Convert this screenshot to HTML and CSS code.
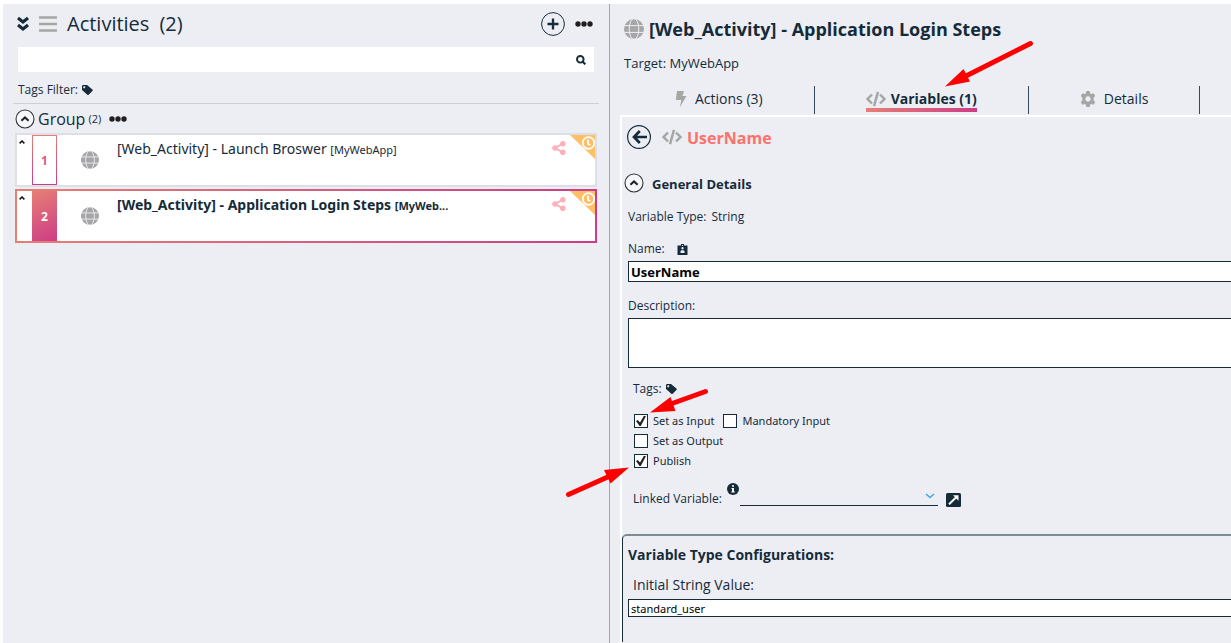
FILE: index.html
```html
<!DOCTYPE html>
<html lang="en">
<head>
<meta charset="utf-8">
<meta name="viewport" content="width=device-width, initial-scale=1">
<title>Activities</title>
<link rel="stylesheet" href="styles.css">
</head>
<body>
<svg class="sprite" aria-hidden="true">
  <symbol id="globe" viewBox="0 0 20 20">
    <circle cx="10" cy="10" r="10" fill="#a6a6a6"/>
    <g fill="none" stroke="#edeef4" stroke-width="1"><ellipse cx="10" cy="10" rx="4.8" ry="10.4"/><path d="M0 6.6h20M0 13.4h20"/></g>
  </symbol>
  <symbol id="dots" viewBox="0 0 18 6"><g fill="#231f20"><circle cx="3" cy="3" r="2.7"/><circle cx="9" cy="3" r="2.7"/><circle cx="15" cy="3" r="2.7"/></g></symbol>
  <symbol id="collapse" viewBox="0 0 20 20"><circle cx="10" cy="10" r="9" fill="#fff" fill-opacity=".5" stroke="#333" stroke-width="1.1"/><path d="M6.4 11.8 10 8.4l3.6 3.4" fill="none" stroke="#222" stroke-width="2"/></symbol>
  <symbol id="tag" viewBox="0 0 12 12"><path fill="#152b39" fill-rule="evenodd" d="M1 2.2Q1 1 2.2 1H6l5.4 4.6q.7.6 0 1.300L7.700 10.700q-.7.700-1.400 0L1 6zM3.200 2.300a1 1 0 1 0 .01 0z"/></symbol>
  <symbol id="code" viewBox="0 0 20 16"><path d="M6 3.500 1.600 8 6 12.500M14 3.500 18.400 8 14 12.500M12 .8 8 15.200" fill="none" stroke="#a6a6a6" stroke-width="2.500"/></symbol>
  <symbol id="share" viewBox="0 0 14 14"><path d="M11 2.500 3 7l8 4.500" fill="none" stroke="#ffb1bb" stroke-width="2"/><g fill="#ffb1bb"><circle cx="10.800" cy="2.800" r="2.800"/><circle cx="3" cy="7" r="2.800"/><circle cx="10.800" cy="11.200" r="2.800"/></g></symbol>
  <symbol id="clock" viewBox="0 0 25 24"><path d="M0 0h25v24z" fill="#ffbf66"/><circle cx="18.500" cy="8" r="5.800" fill="none" stroke="#fff" stroke-width="1.700"/><path d="M18 4.500v4.200l2.200 1.500" fill="none" stroke="#fff" stroke-width="1.700"/></symbol>
  <symbol id="caret" viewBox="0 0 6 4"><path d="M.6 3.400 3 1l2.400 2.400" fill="none" stroke="#111" stroke-width="1.500"/></symbol>
</svg>

<main class="workspace">
  <section class="activities" aria-label="Activities">
    <header class="activities-head">
      <button class="icon-button" aria-label="Expand all"><svg width="12" height="16" viewBox="0 0 12 16"><path d="M1 2l5 4 5-4M1 9l5 4 5-4" fill="none" stroke="#152b39" stroke-width="3.200"/></svg></button>
      <button class="icon-button" aria-label="List view"><svg width="18" height="16" viewBox="0 0 18 16"><path d="M0 1.500h18M0 8h18M0 14.500h18" stroke="#a6a6a6" stroke-width="2.600"/></svg></button>
      <h1 class="activities-title"><span>Activities</span><span>(2)</span></h1>
      <button class="icon-button add" aria-label="Add activity"><svg width="24" height="24" viewBox="0 0 24 24"><circle cx="12" cy="12" r="11.400" fill="none" stroke="#152b39"/><path d="M12 6.500v11M6.500 12h11" stroke="#152b39" stroke-width="2.300"/></svg></button>
      <button class="icon-button" aria-label="More options"><svg width="18" height="6"><use href="#dots"/></svg></button>
    </header>
    <div class="search">
      <input class="search-input" type="search" aria-label="Search activities">
      <button class="icon-button" aria-label="Search"><svg width="10" height="10" viewBox="0 0 10 10"><circle cx="4.300" cy="4.300" r="3.300" fill="none" stroke="#152b39" stroke-width="1.900"/><path d="M6.500 6.500 9.300 9.300" stroke="#152b39" stroke-width="2.200"/></svg></button>
    </div>
    <div class="tags-filter">Tags Filter: <button class="icon-button" aria-label="Filter by tag"><svg width="12" height="12"><use href="#tag"/></svg></button></div>
    <div class="group-head">
      <button class="icon-button" aria-label="Collapse group"><svg width="20" height="20"><use href="#collapse"/></svg></button>
      <h2 class="group-name">Group</h2><span class="group-count">(2)</span>
      <button class="icon-button" aria-label="Group options"><svg width="18" height="6"><use href="#dots"/></svg></button>
    </div>
    <div class="cards">
      <article class="card">
        <button class="icon-button card-caret" aria-label="Collapse"><svg width="6" height="4"><use href="#caret"/></svg></button>
        <span class="card-number">1</span>
        <svg class="card-globe" width="18" height="18"><use href="#globe"/></svg>
        <p class="card-name">[Web_Activity] - Launch Broswer <small class="card-target">[MyWebApp]</small></p>
        <svg class="card-share" width="14" height="14"><use href="#share"/></svg>
        <svg width="25" height="24"><use href="#clock"/></svg>
      </article>
      <article class="card card-selected">
        <button class="icon-button card-caret" aria-label="Collapse"><svg width="6" height="4"><use href="#caret"/></svg></button>
        <span class="card-number">2</span>
        <svg class="card-globe" width="18" height="18"><use href="#globe"/></svg>
        <p class="card-name">[Web_Activity] - Application Login Steps <small class="card-target">[MyWeb...</small></p>
        <svg class="card-share" width="14" height="14"><use href="#share"/></svg>
        <svg width="25" height="24"><use href="#clock"/></svg>
      </article>
    </div>
  </section>

  <section class="editor" aria-label="Activity editor">
    <header class="editor-head">
      <svg width="20" height="20"><use href="#globe"/></svg>
      <h2 class="editor-title">[Web_Activity] - Application Login Steps</h2>
    </header>
    <p class="target">Target: MyWebApp</p>
    <nav class="tabs">
      <a class="tab" href="#actions"><span class="tab-label"><svg width="12" height="16" viewBox="0 0 12 16"><path d="M2 0h7L7.500 5H11.500L5 16l1.300-7H.8z" fill="#a6a6a6"/></svg>Actions (3)</span></a>
      <a class="tab tab-active" href="#variables"><span class="tab-label"><svg width="20" height="16"><use href="#code"/></svg>Variables (1)</span></a>
      <a class="tab" href="#details"><span class="tab-label"><svg width="16" height="16" viewBox="0 0 16 16"><path fill="#a6a6a6" fill-rule="evenodd" d="M6.300 0h3.400l.4 2.200 1.300.8 2.200-.8 1.700 2.900L13.600 6.600v2.800l1.700 1.500-1.700 2.900-2.200-.8-1.300.8-.4 2.200H6.300l-.4-2.200-1.300-.8-2.200.8-1.700-2.900 1.700-1.500V6.600L.7 5.100l1.700-2.900 2.200.8 1.300-.8zM8 5.300a2.700 2.700 0 1 0 .01 0z"/></svg>Details</span></a>
    </nav>

    <div class="panel">
      <div class="variable-head">
        <button class="icon-button" aria-label="Back"><svg width="24" height="24" viewBox="0 0 24 24"><circle cx="12" cy="12" r="11.400" fill="none" stroke="#152b39" stroke-width="1.200"/><path d="M12.800 6 7 12l5.800 6M7 12h13" fill="none" stroke="#152b39" stroke-width="2.700"/></svg></button>
        <svg width="20" height="16"><use href="#code"/></svg>
        <h3 class="variable-name">UserName</h3>
      </div>
      <div class="section-head">
        <button class="icon-button" aria-label="Collapse general details"><svg width="20" height="20"><use href="#collapse"/></svg></button>
        <h4 class="section-title">General Details</h4>
      </div>
      <form class="details">
        <p class="line variable-type"><span>Variable Type:</span><span>String</span></p>
        <div class="line name-line"><label for="name">Name:</label><svg width="11" height="11" viewBox="0 0 11 11"><path fill="#152b39" fill-rule="evenodd" d="M.5 1.500H4V0h3v1.500h3.500V11H.5zM5.500 3a1.200 1.200 0 1 0 .01 0zM3.500 7v2h4V7l-1-.8h-2z"/><path d="M5 1h1v1H5z" fill="#edeef4"/></svg></div>
        <input class="field field-name" id="name" type="text" value="UserName">
        <label class="line description-label" for="description">Description:</label>
        <textarea class="field field-description" id="description"></textarea>
        <div class="options">
          <div class="line tags">Tags: <button type="button" class="icon-button" aria-label="Edit tags"><svg width="12" height="12"><use href="#tag"/></svg></button></div>
          <div class="checks">
            <div class="check-row">
              <label class="check"><input class="check-box" type="checkbox" checked>Set as Input</label>
              <label class="check"><input class="check-box" type="checkbox">Mandatory Input</label>
            </div>
            <label class="check"><input class="check-box" type="checkbox">Set as Output</label>
            <label class="check"><input class="check-box" type="checkbox" checked>Publish</label>
          </div>
          <div class="linked">
            <label for="linked">Linked Variable:</label>
            <svg class="info" width="12" height="12" viewBox="0 0 12 12"><circle cx="6" cy="6" r="6" fill="#152b39"/><path d="M5 2.200h2v1.600H5zM4.500 5H7v3.500h.8v1H4.300v-1H5V6h-.5z" fill="#fff"/></svg>
            <span class="select-wrap">
              <select class="select" id="linked"><option></option></select>
              <svg class="select-arrow" width="10" height="6" viewBox="0 0 10 6"><path d="M1 1l4 3.500L9 1" fill="none" stroke="#3fa2ee" stroke-width="1.400"/></svg>
            </span>
            <button type="button" class="icon-button" aria-label="Open linked variable"><svg width="15" height="14" viewBox="0 0 15 14"><rect width="15" height="14" rx="1.500" fill="#152b39"/><path d="M3 11.200 11 3.500" stroke="#fff" stroke-width="1.900"/><path d="M7 2.200h5.500v5.500z" fill="#fff"/></svg></button>
          </div>
        </div>
        <fieldset class="config">
          <h4 class="config-title">Variable Type Configurations:</h4>
          <label class="config-label" for="initial">Initial String Value:</label>
          <input class="field field-initial" id="initial" type="text" value="standard_user">
        </fieldset>
      </form>
    </div>
  </section>
</main>

<svg class="arrows" width="1231" height="643" viewBox="0 0 1231 643" aria-hidden="true">
  <g stroke="#fe0000" stroke-width="5" stroke-linecap="round"><path d="M1030.500 43.500 966 76M705.500 391.500 672 403.500M568.500 494.500 610 476"/></g>
  <g fill="#fe0000"><path d="M945 86.500 963.500 69l6.500 12.500zM650 412.500 670.500 397l5 14zM629 467.500 604 470l6.500 13.500z"/></g>
</svg>
</body>
</html>
```
FILE: styles.css
```css
* {
  box-sizing: border-box;
}

body {
  display: flex;
  min-height: 100vh;
  margin: 0;
  padding: 4px 0 0 3px;
  overflow-x: hidden;
  background: #fff;
  color: #152b39;
  font-family: "Open Sans", "Noto Sans", sans-serif;
  font-size: 12px;
  line-height: 16px;
}

h1, h2, h3, h4, p {
  margin: 0;
}

svg {
  display: block;
  flex: none;
}

.sprite {
  position: absolute;
  width: 0;
  height: 0;
}

.icon-button {
  display: flex;
  flex: none;
  padding: 0;
  border: 0;
  background: none;
  cursor: pointer;
}

.workspace {
  display: grid;
  flex: 1;
  grid-template-columns: minmax(0, 607fr) minmax(0, 621fr);
  background: #edeef4;
}

/* Activity list */

.activities {
  padding: 6px 12px 0;
  border-right: 1px solid #a5a6ab;
}

.activities-head {
  display: flex;
  align-items: center;
  gap: 10px;
  height: 28px;
  padding: 0 4px 0 2px;
}

.activities-title {
  display: flex;
  gap: 10px;
  font-size: 20px;
  font-weight: 400;
  line-height: 28px;
}

.add {
  margin-left: auto;
}

.search {
  display: flex;
  align-items: center;
  height: 25px;
  margin: 9px 3px 0;
  padding-right: 8px;
  background: #fff;
}

.search-input {
  flex: 1;
  min-width: 0;
  height: 25px;
  border: 0;
  outline: 0;
  background: none;
}

.tags-filter {
  display: flex;
  align-items: center;
  gap: 3px;
  height: 32px;
  margin: 0 -2px;
  padding: 4px 5px 0;
  border-bottom: 1px solid #cfd0d4;
}

.group-head {
  display: flex;
  align-items: center;
  height: 29px;
  gap: 3px;
}

.group-name {
  font-size: 16px;
  font-weight: 400;
}

.group-count {
  margin-right: 5px;
  font-size: 11px;
}

.cards {
  display: grid;
  gap: 2px;
}

.card {
  display: flex;
  height: 54px;
  border: 2px solid #dcdfe6;
  background: #fff;
}

.card-selected {
  border-color: transparent;
  background:
    linear-gradient(#fff, #fff) padding-box,
    linear-gradient(90deg, #e67f75, #cd3c86) border-box;
}

.card-caret {
  width: 15px;
  padding: 5px 0 0 2px;
}

.card-number {
  flex: none;
  width: 25px;
  border: 1px solid transparent;
  background:
    linear-gradient(#fff, #fff) padding-box,
    linear-gradient(#e67f75, #cd3c86) border-box;
  color: #dd5a7c;
  font-size: 12px;
  font-weight: 700;
  line-height: 50px;
  text-align: center;
}

.card-selected .card-number {
  background: linear-gradient(155deg, #e67f75, #cd3c86) border-box;
  color: #fff;
}

.card-globe {
  align-self: center;
  margin: 0 18px 0 24px;
}

.card-name {
  flex: 1;
  min-width: 0;
  padding-top: 4px;
  overflow: hidden;
  font-family: "Noto Sans", "Open Sans", sans-serif;
  font-size: 14px;
  line-height: 20px;
  white-space: nowrap;
}

.card-selected .card-name {
  font-weight: 700;
}

.card-target {
  font-size: 11px;
}

.card-share {
  margin: 6px 4px 0 0;
}

/* Editor */

.editor {
  display: flex;
  flex-direction: column;
  padding: 13px 0 0 10px;
}

.editor-head {
  display: flex;
  align-items: center;
  gap: 5px;
  height: 24px;
  padding-left: 4px;
}

.editor-title {
  font-size: 18px;
  line-height: 24px;
  white-space: nowrap;
}

.target {
  padding: 13px 4px 0;
  font-size: 13px;
  line-height: 18px;
}

.tabs {
  display: flex;
  height: 28px;
  margin: 14px 0 1px 4px;
}

.tab {
  flex: none;
  padding: 0 51px;
  border-right: 1px solid #33485a;
  color: inherit;
  font-size: 14px;
  text-decoration: none;
}

.tab-label {
  display: flex;
  align-items: center;
  gap: 8px;
  height: 26px;
}

.tab-active .tab-label {
  gap: 5px;
  border-bottom: 4px solid;
  border-image: linear-gradient(90deg, #e67f75, #cd3c86) 1;
  border-width: 0 0 4px;
  padding-top: 4px;
  font-weight: 700;
}

.panel {
  flex: 1;
  border: solid #fff;
  border-width: 2px 0 0 2px;
}

.variable-head {
  display: flex;
  align-items: center;
  height: 40px;
  gap: 11px;
  padding-left: 5px;
}

.variable-name {
  margin-left: -6px;
  padding-top: 2px;
  color: #fb726d;
  font-size: 16px;
}

.section-head {
  display: flex;
  align-items: center;
  gap: 8px;
  height: 20px;
  margin-top: 16px;
  padding-left: 2px;
}

.section-title {
  padding-top: 2px;
  font-size: 13px;
}

.line {
  display: flex;
  padding-left: 6px;
}

.variable-type {
  gap: 5px;
  margin-top: 16px;
}

.name-line {
  align-items: center;
  gap: 12px;
  margin: 16px 0 4px;
}

.field {
  display: block;
  width: 100%;
  margin: 0;
  padding: 0 2px;
  border: 1px solid #152b39;
  border-right: 0;
  border-radius: 0;
  outline: 0;
  background: #fff;
  color: #000;
  font-family: inherit;
}

.field-name,
.field-description {
  width: calc(100% - 6px);
  margin-left: 6px;
}

.field-name {
  height: 21px;
  font-size: 13px;
  font-weight: 700;
}

.description-label {
  margin: 16px 0 4px;
}

.field-description {
  height: 50px;
  resize: none;
}

.options {
  padding: 13px 0 27px 11px;
}

.tags {
  align-items: center;
  gap: 3px;
  padding-left: 0;
}

.checks {
  display: grid;
  gap: 4px;
  margin: 16px 0 0 1px;
  font-family: "Noto Sans", "Open Sans", sans-serif;
  font-size: 11px;
}

.check-row {
  display: flex;
  gap: 9px;
}

.check {
  display: flex;
  align-items: center;
  gap: 5px;
}

.check-box {
  display: grid;
  width: 14px;
  height: 14px;
  margin: 0;
  border: 1px solid #152b39;
  background: #fff;
  appearance: none;
}

.check-box:checked::before {
  content: "";
  width: 10px;
  height: 10px;
  margin: 1px;
  background: #222;
  clip-path: polygon(0 50%, 18% 40%, 40% 65%, 78% 0, 100% 0, 48% 100%, 35% 100%);
}

.linked {
  display: flex;
  align-items: flex-end;
  height: 24px;
  margin-top: 14px;
}

.info {
  align-self: flex-start;
  margin: 0 1px 0 5px;
}

.select-wrap {
  position: relative;
  width: 198px;
}

.select {
  display: block;
  width: 100%;
  height: 20px;
  margin: 0 0 1px;
  border: 0;
  border-bottom: 1px solid #152b39;
  border-radius: 0;
  background: none;
  appearance: none;
}

.select-arrow {
  position: absolute;
  top: 7px;
  right: 3px;
  pointer-events: none;
}

.linked .icon-button {
  margin-left: 8px;
}

.config {
  min-width: 0;
  height: 108px;
  margin: 0;
  padding: 10px 0 0 5px;
  border: 1px solid #152b39;
  border-top: 2px solid #7c8c94;
  border-width: 2px 0 0 1px;
  border-top-left-radius: 5px;
}

.config-title {
  font-size: 14px;
  line-height: 18px;
}

.config-label {
  display: block;
  padding: 12px 5px 5px;
  font-size: 14px;
  line-height: 18px;
}

.field-initial {
  height: 18px;
  font-family: "Noto Sans", "Open Sans", sans-serif;
  font-size: 11px;
}

/* Callout arrows drawn over the page */

.arrows {
  position: absolute;
  top: 0;
  left: 0;
  pointer-events: none;
}
```
